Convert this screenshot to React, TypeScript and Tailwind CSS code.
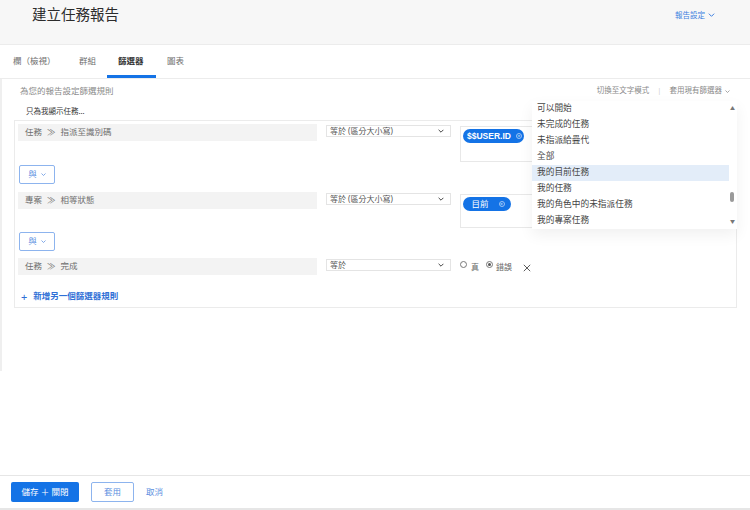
import type { ReactNode } from 'react'

const OPTIONS = [
  '可以開始',
  '未完成的任務',
  '未指派給疊代',
  '全部',
  '我的目前任務',
  '我的任務',
  '我的角色中的未指派任務',
  '我的專案任務',
]

function Chevron({ className }: { className?: string }) {
  return (
    <svg viewBox="0 0 10 6" className={className} fill="none" stroke="currentColor" strokeWidth={1.5}>
      <path d="M1 1l4 4 4-4" />
    </svg>
  )
}

function Field({ children }: { children: ReactNode }) {
  return (
    <div className="flex h-[17px] w-[299px] items-center bg-[#f3f3f3] pl-[7px] text-[8.5px] text-[#6e6e6e]">
      {children}
    </div>
  )
}

function Select({ label }: { label: string }) {
  return (
    <div className="ml-[9px] mt-[1px] flex h-[12px] w-[125px] items-center justify-between border border-[#e4e4e4] bg-white pl-[3px] pr-[6px] text-[8px] text-[#555]">
      <span>{label}</span>
      <Chevron className="h-[4px] w-[6px] text-[#333]" />
    </div>
  )
}

function Pill({ label, wide }: { label: string; wide?: boolean }) {
  return (
    <div
      className={`flex h-[14px] items-center rounded-full bg-[#1473e6] text-white ${
        wide ? 'w-[61px] pl-[4px]' : 'w-[48px] justify-center gap-[10px] pl-[2px]'
      }`}
    >
      <span className={wide ? "font-['Liberation_Sans'] text-[8.5px] font-bold" : 'text-[8.5px]'}>{label}</span>
      <span className={`flex h-[6px] w-[6px] items-center justify-center rounded-full border border-[#9cc3f5] text-[5px] leading-none text-[#cfe2fb] ${wide ? 'ml-[5px]' : ''}`}>
        ×
      </span>
    </div>
  )
}

function AndButton() {
  return (
    <div className="ml-[4px] flex h-[19px] w-[36px] items-center justify-center gap-[4px] rounded-[2px] border border-[#8db4ee] bg-white text-[8.5px] text-[#5a8ee0]">
      <span>與</span>
      <Chevron className="h-[3px] w-[5px]" />
    </div>
  )
}

export default function App() {
  return (
    <div className="relative flex h-[510px] w-[750px] flex-col overflow-hidden bg-white font-[family-name:'Noto_Sans','Noto_Sans_CJK_TC',sans-serif]">
      {/* header */}
      <div className="flex h-[45px] shrink-0 items-start justify-between border-b border-[#ececec] bg-[#f7f7f7] pl-[32px] pr-[35px]">
        <h1 className="pt-[5px] text-[14.5px] leading-[18px] text-[#2c2c2c]">建立任務報告</h1>
        <div className="flex items-center gap-[3px] pt-[10px] text-[7.5px] leading-[10px] text-[#3d7fe0]">
          <span>報告設定</span>
          <Chevron className="h-[4px] w-[7px]" />
        </div>
      </div>

      {/* tabs */}
      <div className="flex h-[34px] shrink-0 border-b border-[#ececec] pl-[2px] text-[8.5px] text-[#6e6e6e]">
        <div className="flex w-[66px] items-center pl-[11px]">欄（檢視）</div>
        <div className="flex w-[39px] items-center pl-[11px]">群組</div>
        <div className="flex w-[49px] items-center border-b-[3px] border-[#1473e6] pl-[11px] pt-[3px] font-bold text-[#333]">
          篩選器
        </div>
        <div className="flex items-center pl-[11px]">圖表</div>
      </div>

      {/* content */}
      <div className="relative h-[292px] shrink-0 border-l-2 border-[#efefef]">
        <div className="flex h-[24px] items-center justify-between pl-[18px] pr-[20px]">
          <span className="text-[8.5px] text-[#8a8a8a]">為您的報告設定篩選規則</span>
          <div className="flex items-center text-[7.5px] text-[#8a8a8a]">
            <span>切換至文字模式</span>
            <span className="mx-[8px] text-[#cfcfcf]">|</span>
            <span>套用現有篩選器</span>
            <Chevron className="ml-[3px] h-[3px] w-[5px]" />
          </div>
        </div>
        <div className="flex h-[17px] items-center pl-[24px] text-[7.5px] text-[#333]">只為我顯示任務...</div>

        <div className="ml-[12px] w-[723px] border border-[#ebebeb] bg-white pb-[4px] pt-[3px]">
          {/* row 1 */}
          <div className="flex h-[38px] items-start pl-[3px]">
            <Field>
              任務<span className="mx-[5px]">≫</span>指派至識別碼
            </Field>
            <Select label="等於 (區分大小寫)" />
            <div className="ml-[9px] mt-[2px] h-[36px] w-[100px] border border-[#e8e8e8] p-[2px]">
              <Pill label="$$USER.ID" wide />
            </div>
          </div>
          <div className="mt-[3px]">
            <AndButton />
          </div>

          {/* row 2 */}
          <div className="mt-[8px] flex h-[36px] items-start pl-[3px]">
            <Field>
              專案<span className="mx-[5px]">≫</span>相等狀態
            </Field>
            <Select label="等於 (區分大小寫)" />
            <div className="ml-[9px] mt-[2px] h-[34px] w-[100px] border border-[#e8e8e8] p-[2px]">
              <Pill label="目前" />
            </div>
          </div>
          <div className="mt-[4px]">
            <AndButton />
          </div>

          {/* row 3 */}
          <div className="mt-[7px] flex h-[17px] items-start pl-[3px]">
            <Field>
              任務<span className="mx-[5px]">≫</span>完成
            </Field>
            <div className="ml-[9px] mt-[1px] flex h-[12px] w-[125px] items-center justify-between border border-[#e4e4e4] bg-white pl-[3px] pr-[6px] text-[8px] text-[#555]">
              <span>等於</span>
              <Chevron className="h-[4px] w-[6px] text-[#333]" />
            </div>
            <div className="ml-[9px] mt-[2px] flex items-start text-[8px] text-[#666]">
              <span className="mt-[0.5px] h-[7px] w-[7px] rounded-full border border-[#777] bg-white" />
              <span className="ml-[4px] mt-[2px] leading-[10px]">真</span>
              <span className="ml-[7px] mt-[0.5px] flex h-[7px] w-[7px] items-center justify-center rounded-full border border-[#777] bg-white">
                <span className="h-[3px] w-[3px] rounded-full bg-[#555]" />
              </span>
              <span className="ml-[3px] mt-[2px] leading-[10px]">錯誤</span>
              <svg viewBox="0 0 10 10" className="ml-[11px] mt-[4px] h-[8px] w-[8px] text-[#555]" stroke="currentColor" strokeWidth={1.2}>
                <path d="M1 1l8 8M9 1l-8 8" />
              </svg>
            </div>
          </div>

          <div className="mt-[14px] flex h-[14px] items-center pl-[6px] text-[8.5px] font-bold text-[#2f6fd6]">
            <span className="text-[11px] font-normal leading-none">+</span>
            <span className="ml-[6px]">新增另一個篩選器規則</span>
          </div>
        </div>

        {/* dropdown overlay */}
        <div className="absolute left-[530px] top-[22px] flex h-[128px] w-[205px] bg-white shadow-[0_6px_14px_rgba(0,0,0,0.06)]">
          <div className="w-[197px]">
            {OPTIONS.map((o, i) => (
              <div
                key={o}
                className={`flex h-[16px] items-center pl-[5px] text-[8.7px] text-[#444] ${
                  i === 4 ? 'bg-[#e3edf9]' : ''
                }`}
              >
                {o}
              </div>
            ))}
          </div>
          <div className="relative w-[8px]">
            <span className="absolute left-[1px] top-[5px] text-[5px] leading-none text-[#777]">▲</span>
            <span className="absolute left-[0.5px] top-[91px] h-[10px] w-[4px] rounded-full bg-[#9a9a9a]" />
            <span className="absolute left-[1px] top-[118px] text-[5px] leading-none text-[#777]">▼</span>
          </div>
        </div>
      </div>

      <div className="flex-1" />

      {/* footer */}
      <div className="flex h-[35px] shrink-0 items-start gap-[12px] border-b-2 border-t border-[#e6e6e6] pl-[11px] pt-[6px] text-[8.5px]">
        <div className="flex h-[20px] w-[68px] items-center justify-center rounded-[2px] bg-[#1473e6] text-white">
          儲存 ＋ 關閉
        </div>
        <div className="flex h-[20px] w-[43px] items-center justify-center rounded-[2px] border border-[#8db4ee] text-[#5a8ee0]">
          套用
        </div>
        <div className="flex h-[20px] items-center text-[#5a8ee0]">取消</div>
      </div>
    </div>
  )
}
